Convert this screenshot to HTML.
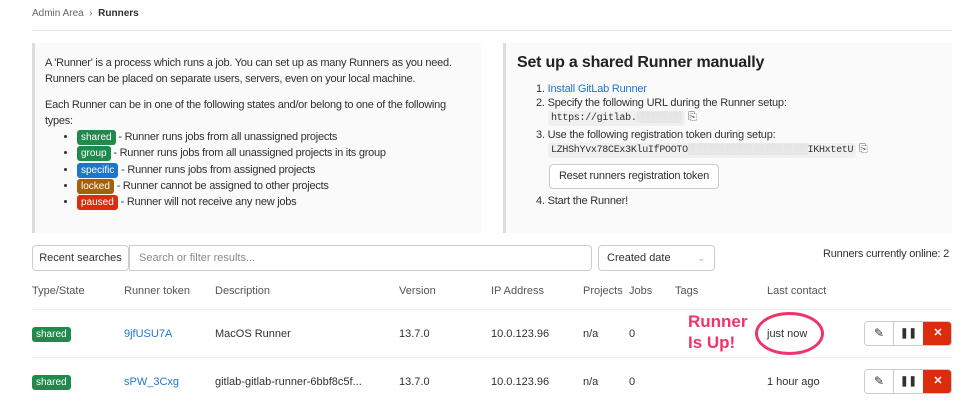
<!DOCTYPE html>
<html><head><meta charset="utf-8"><style>
*{box-sizing:border-box;margin:0;padding:0}
body{width:977px;height:404px;background:#fff;font-family:"Liberation Sans",sans-serif;font-size:11px;color:#303030;position:relative;overflow:hidden}
.a{position:absolute;white-space:nowrap}
.box{position:absolute;background:#fafafa;border-left:3px solid #dcdcdc}
.b{display:inline-block;color:#fff;border-radius:3px;padding:1px 4px;font-size:10px;line-height:13px;letter-spacing:0}
.g{background:#1f8a4c}.bl{background:#1f75cb}.br{background:#a4600a}.r{background:#dd2b0e}
ul{list-style:disc;padding-left:42px}
li{line-height:16.3px}
.mono{font-family:"Liberation Mono",monospace;font-size:10px;background:#f0f0f0;padding:2px 3px;border-radius:3px;letter-spacing:-0.3px}
.link{color:#1f75cb}
.btn{position:absolute;border:1px solid #ccc;border-radius:4px;background:#fff}
.hd{color:#555}
</style></head><body>
<div class="a" style="left:32px;top:8px;color:#666;font-size:10px">Admin Area&nbsp; › &nbsp;<b style="color:#303030">Runners</b></div>
<div class="a" style="left:32px;top:30px;width:920px;height:1px;background:#e5e5e5"></div>

<div class="box" style="left:32px;top:43px;width:449px;height:190px;letter-spacing:-0.25px">
<div style="padding:12px 8px 0 10px;line-height:16px">A 'Runner' is a process which runs a job. You can set up as many Runners as you need. Runners can be placed on separate users, servers, even on your local machine.</div>
<div style="padding:10px 8px 0 10px;line-height:16px">Each Runner can be in one of the following states and/or belong to one of the following types:</div>
<ul>
<li><span class="b g">shared</span> - Runner runs jobs from all unassigned projects</li>
<li><span class="b g">group</span> - Runner runs jobs from all unassigned projects in its group</li>
<li><span class="b bl">specific</span> - Runner runs jobs from assigned projects</li>
<li><span class="b br">locked</span> - Runner cannot be assigned to other projects</li>
<li><span class="b r">paused</span> - Runner will not receive any new jobs</li>
</ul>
</div>

<div class="box" style="left:503px;top:43px;width:449px;height:190px;letter-spacing:-0.2px">
<div class="a" style="left:11px;top:11px;font-size:16px;font-weight:bold;color:#222">Set up a shared Runner manually</div>
<div class="a" style="left:30px;top:38px;line-height:16px">1. <span class="link">Install GitLab Runner</span></div>
<div class="a" style="left:30px;top:54px">2. Specify the following URL during the Runner setup:</div>
<div class="a" style="left:42px;top:68px"><span class="mono">https://gitlab.<span style="color:#ccc">▒▒▒▒▒▒▒▒</span></span> <span style="color:#555">⎘</span></div>
<div class="a" style="left:30px;top:86px">3. Use the following registration token during setup:</div>
<div class="a" style="left:42px;top:100px"><span class="mono">LZHShYvx78CEx3KluIfPOOTO<span style="color:#ccc">▒▒▒▒▒▒▒▒▒▒▒▒▒▒▒▒▒▒▒▒▒</span>IKHxtetU</span> <span style="color:#555">⎘</span></div>
<div class="btn" style="left:43px;top:121px;width:170px;height:25px;line-height:23px;text-align:center">Reset runners registration token</div>
<div class="a" style="left:30px;top:152px">4. Start the Runner!</div>
</div>

<div class="btn" style="left:32px;top:245px;width:97px;height:26px;line-height:24px;text-align:center">Recent searches</div>
<div class="btn" style="left:129px;top:245px;width:463px;height:26px;line-height:24px;padding-left:9px;color:#888;border-radius:0 4px 4px 0">Search or filter results...</div>
<div class="btn" style="left:598px;top:245px;width:117px;height:26px;line-height:24px;padding-left:8px">Created date<span style="position:absolute;right:9px;color:#aaa;font-size:9px">⌄</span></div>
<div class="a" style="left:823px;top:248px;letter-spacing:-0.2px">Runners currently online: 2</div>

<div class="a hd" style="left:32px;top:285px">Type/State</div>
<div class="a hd" style="left:124px;top:285px">Runner token</div>
<div class="a hd" style="left:215px;top:285px">Description</div>
<div class="a hd" style="left:399px;top:285px">Version</div>
<div class="a hd" style="left:491px;top:285px">IP Address</div>
<div class="a hd" style="left:583px;top:285px">Projects</div>
<div class="a hd" style="left:629px;top:285px">Jobs</div>
<div class="a hd" style="left:675px;top:285px">Tags</div>
<div class="a hd" style="left:767px;top:285px">Last contact</div>
<div class="a" style="left:32px;top:309px;width:920px;height:1px;background:#eee"></div>
<div class="a" style="left:32px;top:357px;width:920px;height:1px;background:#eee"></div>

<div class="a" style="left:32px;top:327px"><span class="b g">shared</span></div>
<div class="a link" style="left:124px;top:328px">9jfUSU7A</div>
<div class="a" style="left:215px;top:328px">MacOS Runner</div>
<div class="a" style="left:399px;top:328px">13.7.0</div>
<div class="a" style="left:491px;top:328px">10.0.123.96</div>
<div class="a" style="left:583px;top:328px">n/a</div>
<div class="a" style="left:629px;top:328px">0</div>
<div class="a" style="left:767px;top:328px">just now</div>

<div class="a" style="left:32px;top:375px"><span class="b g">shared</span></div>
<div class="a link" style="left:124px;top:376px">sPW_3Cxg</div>
<div class="a" style="left:215px;top:376px">gitlab-gitlab-runner-6bbf8c5f...</div>
<div class="a" style="left:399px;top:376px">13.7.0</div>
<div class="a" style="left:491px;top:376px">10.0.123.96</div>
<div class="a" style="left:583px;top:376px">n/a</div>
<div class="a" style="left:629px;top:376px">0</div>
<div class="a" style="left:767px;top:376px">1 hour ago</div>

<div class="a" style="left:688px;top:311px;color:#f0336a;font-weight:bold;font-size:17px;line-height:21px;white-space:normal;width:70px">Runner<br>Is Up!</div>
<div class="a" style="left:755px;top:312px;width:69px;height:43px;border:3px solid #f0336a;border-radius:50%"></div>

<div class="btn" style="left:864px;top:321px;width:88px;height:25px;overflow:hidden">
<span class="a" style="left:0;top:0;width:29px;height:23px;border-right:1px solid #ccc;text-align:center;line-height:23px;font-size:12px">✎</span>
<span class="a" style="left:29px;top:0;width:29px;height:23px;text-align:center;line-height:23px;font-weight:bold;font-size:10px">❚❚</span>
<span class="a" style="left:58px;top:0;width:30px;height:23px;background:#dd2b0e;color:#fff;text-align:center;line-height:23px;font-weight:bold">✕</span></div>
<div class="btn" style="left:864px;top:369px;width:88px;height:25px;overflow:hidden">
<span class="a" style="left:0;top:0;width:29px;height:23px;border-right:1px solid #ccc;text-align:center;line-height:23px;font-size:12px">✎</span>
<span class="a" style="left:29px;top:0;width:29px;height:23px;text-align:center;line-height:23px;font-weight:bold;font-size:10px">❚❚</span>
<span class="a" style="left:58px;top:0;width:30px;height:23px;background:#dd2b0e;color:#fff;text-align:center;line-height:23px;font-weight:bold">✕</span></div>
</body></html>
